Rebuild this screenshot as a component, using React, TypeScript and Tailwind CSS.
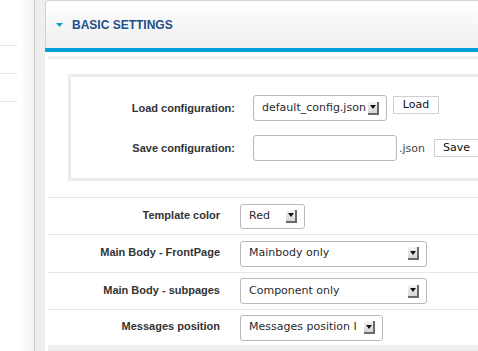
import React from "react";

function Arrow() {
  return (
    <span className="flex h-[13px] w-[11px] items-center justify-center border-r-2 border-b-2 border-r-[#6a6a6a] border-b-[#6a6a6a] bg-gradient-to-b from-[#f4f4f4] to-[#d6d6d6]">
      <svg width="6" height="4" viewBox="0 0 6 4">
        <path d="M0 0 L6 0 L3 4 Z" fill="#111" />
      </svg>
    </span>
  );
}

function Sel({ text, w, h }: { text: string; w: string; h: string }) {
  return (
    <div
      className={`flex items-center justify-between rounded-[3px] border border-[#b9b9b9] bg-white pl-[8px] pr-[7px] text-[11px] text-[#2a2a2a] ${w} ${h}`}
      style={{ fontFamily: '"DejaVu Sans", sans-serif' }}
    >
      <span className="whitespace-nowrap">{text}</span>
      <Arrow />
    </div>
  );
}

const labelCls =
  "text-right text-[11px] font-bold text-[#333] whitespace-nowrap";
const labelFont = { fontFamily: '"Liberation Sans", Arial, sans-serif' };

export default function App() {
  const rows = [
    { label: "Template color", text: "Red", w: "w-[65px]", h: "h-[25px]", rh: "h-[37px]" },
    { label: "Main Body - FrontPage", text: "Mainbody only", w: "w-[187px]", h: "h-[26px]", rh: "h-[38px]" },
    { label: "Main Body - subpages", text: "Component only", w: "w-[187px]", h: "h-[26px]", rh: "h-[37px]" },
    { label: "Messages position", text: "Messages position I", w: "w-[143px]", h: "h-[26px]", rh: "h-[36px]" },
  ];
  return (
    <div className="flex h-[351px] w-[478px] overflow-hidden bg-white" style={labelFont}>
      {/* left side */}
      <div className="flex w-[34px] shrink-0">
        <div className="w-[20px] pt-[45px]">
          <div className="h-[28px] w-[17px] border-t border-[#e4e4e4]" />
          <div className="h-[28px] w-[17px] border-t border-[#e4e4e4]" />
          <div className="h-[28px] w-[17px] border-t border-[#e4e4e4]" />
        </div>
        <div className="w-[14px] bg-gradient-to-r from-white to-[#f2f2f2]" />
      </div>
      <div className="w-px shrink-0 bg-[#c9c9c9]" />
      <div className="w-[10px] shrink-0 bg-[#eeeeee]" />

      {/* panel */}
      <div className="flex w-[460px] shrink-0 flex-col">
        <div className="flex h-[48px] items-center rounded-tl-[3px] border-t border-l border-[#d2d2d2] bg-gradient-to-b from-white to-[#eeeeee] pl-[10px]">
          <svg width="7" height="4" viewBox="0 0 7 4" className="mr-[9px]">
            <path d="M0 0 L7 0 L3.5 4 Z" fill="#0a9fd8" />
          </svg>
          <span className="text-[12px] font-bold text-[#1d4f88]">BASIC SETTINGS</span>
        </div>
        <div className="h-[4px] bg-[#03a1db]" />
        <div className="flex flex-1 flex-col pl-[3px] pt-[4px]">
          <div className="h-[3px] bg-[#eeeeee]" />
          <div className="pt-[15px]">
            <div className="ml-[20px] h-[107px] border-[3px] border-[#ececec] bg-white">
              <div className="grid grid-cols-[164px_auto] items-center gap-x-[18px] gap-y-[14px] pt-[18px]">
                <div className={labelCls}>Load configuration:</div>
                <div className="flex items-center">
                  <Sel text="default_config.json" w="w-[134px]" h="h-[26px]" />
                  <button
                    className="ml-[6px] -mt-[6px] h-[18px] w-[46px] border border-[#cfcfcf] bg-white text-[11px] text-[#111]"
                    style={{ fontFamily: '"DejaVu Sans", sans-serif' }}
                  >
                    Load
                  </button>
                </div>
                <div className={labelCls}>Save configuration:</div>
                <div className="flex items-center">
                  <div className="h-[26px] w-[144px] rounded-[3px] border border-[#b9b9b9] bg-white" />
                  <span className="ml-[2px] mt-[2px] text-[11px] text-[#444]" style={{ fontFamily: '"DejaVu Sans", sans-serif' }}>
                    .json
                  </span>
                  <button
                    className="ml-[9px] h-[18px] w-[45px] border border-[#cfcfcf] bg-white text-[11px] text-[#111]"
                    style={{ fontFamily: '"DejaVu Sans", sans-serif' }}
                  >
                    Save
                  </button>
                </div>
              </div>
            </div>
          </div>
          <div className="h-[16px]" />
          {rows.map((r) => (
            <div key={r.label} className={`flex items-center border-t border-[#e6e6e6] ${r.rh}`}>
              <div className={`${labelCls} w-[172px] -mt-[2px]`}>{r.label}</div>
              <div className="ml-[20px]">
                <Sel text={r.text} w={r.w} h={r.h} />
              </div>
            </div>
          ))}
          <div className="flex-1 bg-[#eeeeee]" />
        </div>
      </div>
    </div>
  );
}
